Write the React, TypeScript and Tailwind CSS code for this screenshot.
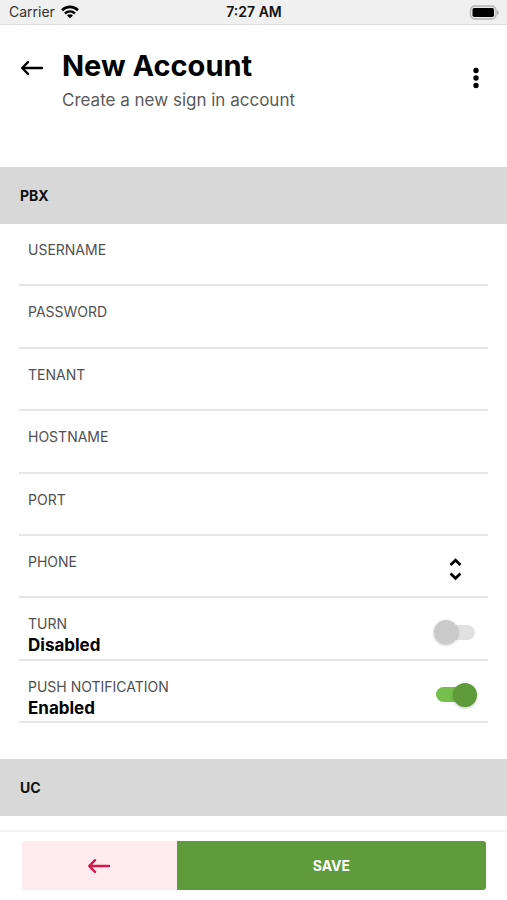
import { useState } from "react";
import type { ReactNode } from "react";

function BackArrow({ className }: { className: string }) {
  return (
    <svg viewBox="0 0 24 16" className={className} fill="none" stroke="currentColor" strokeWidth="2.4" strokeLinejoin="round" strokeLinecap="round" aria-hidden="true">
      <path d="M22 8H2.500M8 2.200 2.200 8 8 13.800" />
    </svg>
  );
}

function StatusBar() {
  return (
    <div className="grid h-[25px] shrink-0 grid-cols-3 items-center border-b border-[#dedede] bg-[#f0f0f0] pr-2 pl-[9px] text-sm">
      <div className="flex items-center gap-[6px] text-[#333]">
        <span>Carrier</span>
        <svg viewBox="0 0 18 14" className="h-[14px] w-[18px]" fill="none" stroke="#000" strokeWidth="2.600" aria-label="Wi-Fi">
          <path d="M1 5.200C5.600 .8 12.400 .8 17 5.200" />
          <path d="M4 8.500C7 5.800 11 5.800 14 8.500" />
          <path d="M9 13.300 6 10.400C7.800 9 10.200 9 12 10.400Z" fill="#000" stroke="none" />
        </svg>
      </div>
      <span className="text-center font-semibold text-[#111]">7:27 AM</span>
      <svg viewBox="0 0 30 15" className="h-[15px] w-[30px] justify-self-end" aria-label="Battery full">
        <rect x="1.500" y="1" width="25.500" height="13" rx="4" fill="#e8e8e8" stroke="#b4b4b4" strokeWidth="1.300" />
        <rect x="3.500" y="3" width="21.500" height="9" rx="1.800" fill="#000" />
        <path d="M28 5v5c1.300-.5 1.900-1.400 1.900-2.500S29.300 5.500 28 5Z" fill="#b4b4b4" />
      </svg>
    </div>
  );
}

function SectionTitle({ children }: { children: ReactNode }) {
  return (
    <h2 className="flex h-[57px] items-center bg-[#d8d8d8] px-5 text-sm font-bold text-[#111]">{children}</h2>
  );
}

const rowClass = "relative border-b-2 border-[#e6e6e6] px-[9px] pt-4";
const labelClass = "block text-sm leading-5 text-[#505050]";

function TextField({ id, label }: { id: string; label: string }) {
  return (
    <div className={rowClass}>
      <label htmlFor={id} className={labelClass}>{label}</label>
      <input id={id} type={id === "password" ? "password" : "text"} className="block h-5 w-full bg-transparent text-base font-semibold outline-none" />
    </div>
  );
}

function SelectField({ id, label }: { id: string; label: string }) {
  return (
    <div className={rowClass}>
      <label htmlFor={id} className={labelClass}>{label}</label>
      <select id={id} className="block h-5 w-full appearance-none bg-transparent text-base font-semibold outline-none">
        <option value=""></option>
      </select>
      <svg viewBox="0 0 14 24" className="pointer-events-none absolute top-[21px] right-[26px] h-6 w-[14px]" fill="none" stroke="#000" strokeWidth="2.700" aria-hidden="true">
        <path d="m2.500 8 5-4.800 5 4.800M2.500 16.500l5 4.800 5-4.800" />
      </svg>
    </div>
  );
}

function ToggleField({ id, label, initial }: { id: string; label: string; initial: boolean }) {
  const [on, setOn] = useState(initial);
  return (
    <div className="flex items-center justify-between border-b-2 border-[#e6e6e6] px-[9px]">
      <div className="self-start pt-4">
        <label htmlFor={id} className={labelClass}>{label}</label>
        <span className="block text-[17px] leading-[22px] font-bold text-black">{on ? "Enabled" : "Disabled"}</span>
      </div>
      <span className={`relative mt-2 flex h-6 w-[42px] items-center ${on ? "mr-[2px] justify-end" : "mr-[3px] justify-start"}`}>
        <span className={`absolute right-[1px] left-[1px] h-[15px] rounded-full ${on ? "bg-[#76bf4c]" : "bg-[#e1e1e1]"}`} />
        <span className={`relative size-6 rounded-full shadow-[0_1px_3px_rgba(0,0,0,0.25)] ${on ? "bg-[#5f9b3a]" : "bg-[#cacaca]"}`} />
        <input
          id={id}
          type="checkbox"
          role="switch"
          checked={on}
          onChange={(event) => setOn(event.target.checked)}
          className="absolute inset-0 size-full cursor-pointer opacity-0"
        />
      </span>
    </div>
  );
}

export default function App() {
  return (
    <div className="flex h-screen flex-col bg-white font-['Inter','Liberation_Sans',sans-serif]">
      <StatusBar />
      <main className="min-h-0 flex-1 overflow-y-auto [scrollbar-width:none]">
        <header className="flex h-[142px] items-start px-5">
          <button type="button" aria-label="Back" className="mt-[35px] mr-[18px] text-black">
            <BackArrow className="h-4 w-6" />
          </button>
          <div className="flex-1 pt-[21px]">
            <h1 className="text-[29px] leading-10 font-bold text-black">New Account</h1>
            <p className="pt-[2px] text-[17px] leading-6 text-[#5a5a5a]">Create a new sign in account</p>
          </div>
          <button type="button" aria-label="More options" className="mt-[42px] mr-2">
            <svg viewBox="0 0 6 22" className="h-[22px] w-[6px]" aria-hidden="true">
              <circle cx="3" cy="3.500" r="2.700" />
              <circle cx="3" cy="11" r="2.700" />
              <circle cx="3" cy="18.500" r="2.700" />
            </svg>
          </button>
        </header>
        <SectionTitle>PBX</SectionTitle>
        <form className="mx-[19px] mb-9 grid min-h-[499px] auto-rows-fr">
          <TextField id="username" label="USERNAME" />
          <TextField id="password" label="PASSWORD" />
          <TextField id="tenant" label="TENANT" />
          <TextField id="hostname" label="HOSTNAME" />
          <TextField id="port" label="PORT" />
          <SelectField id="phone" label="PHONE" />
          <ToggleField id="turn" label="TURN" initial={false} />
          <ToggleField id="push" label="PUSH NOTIFICATION" initial />
        </form>
        <SectionTitle>UC</SectionTitle>
      </main>
      <footer className="shrink-0 border-t-2 border-[#f3f3f3] pt-[9px] pr-[21px] pb-[10px] pl-[22px]">
        <div className="grid h-[49px] grid-cols-3 overflow-hidden rounded-[3px]">
          <button type="button" aria-label="Cancel" className="flex items-center justify-center bg-[#feebef] text-[#d6174b]">
            <BackArrow className="h-4 w-6" />
          </button>
          <button type="button" className="col-span-2 bg-[#5f9b3a] text-sm font-bold text-white">SAVE</button>
        </div>
      </footer>
    </div>
  );
}
